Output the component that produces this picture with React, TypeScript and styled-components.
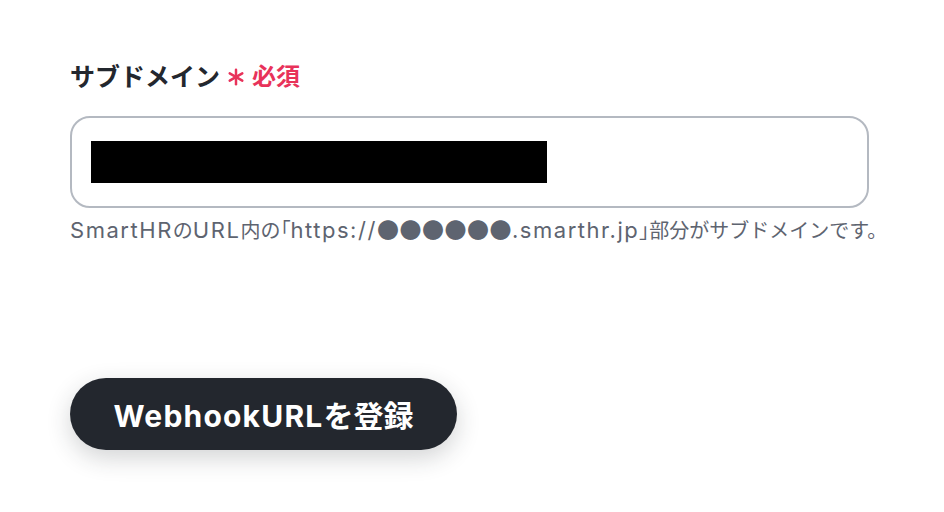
import React from "react"
import styled, { createGlobalStyle } from "styled-components"

const GlobalStyle = createGlobalStyle`
    html, body {
        margin: 0;
        padding: 0;
        background: #ffffff;
    }
    body {
        font-family: Inter, "Noto Sans CJK JP", sans-serif;
        color: #23272e;
    }
`

const Page = styled.div`
    width: 944px;
    height: 512px;
    box-sizing: border-box;
    padding: 59px 56px 0 70px;
    display: flex;
    flex-direction: column;
`

const Field = styled.div`
    display: flex;
    flex-direction: column;
`

const Label = styled.label`
    display: flex;
    align-items: center;
    gap: 7px;
    font-size: 25px;
    font-weight: 700;
    line-height: 36px;
    color: #23272e;
`

const Required = styled.span`
    display: flex;
    align-items: center;
    gap: 7px;
    color: #e8325a;
    font-size: 24px;
`

const Asterisk = styled.svg`
    width: 18px;
    height: 18px;
`

const InputBox = styled.div`
    margin-top: 21px;
    width: 799px;
    height: 92px;
    box-sizing: border-box;
    border: 2px solid #b4b9c1;
    border-radius: 20px;
    padding: 0 19px;
    display: flex;
    align-items: center;
`

const Redacted = styled.div`
    width: 456px;
    height: 42px;
    background: #000000;
`

const Help = styled.p`
    margin: 5px 0 0;
    font-size: 20px;
    line-height: 30px;
    color: #5e6470;
    white-space: nowrap;
`

const Latin = styled.span<{ $size: number; $track: number }>`
    font-size: ${p => p.$size}px;
    letter-spacing: ${p => p.$track}em;
`

const Bracket = styled.span`
    font-family: "Noto Sans CJK JP", sans-serif;
    font-feature-settings: "palt";
`

const Dots = styled.span`
    font-family: "Noto Sans CJK JP", sans-serif;
    font-size: 22px;
    letter-spacing: 0.5px;
`

const SubmitButton = styled.button`
    margin-top: 132px;
    align-self: flex-start;
    width: 387px;
    height: 72px;
    border: none;
    border-radius: 36px;
    background: #23272e;
    color: #ffffff;
    font-family: Inter, "Noto Sans CJK JP", sans-serif;
    font-size: 30px;
    font-weight: 700;
    cursor: pointer;
    box-shadow: 0 8px 24px rgba(35, 39, 46, 0.2);
`

export default function App() {
    return (
        <>
            <GlobalStyle />
            <Page>
                <Field>
                    <Label>
                        サブドメイン
                        <Required>
                            <Asterisk viewBox="0 0 16 16">
                                <g stroke="#e8325a" strokeWidth="2.2" strokeLinecap="round">
                                    <line x1="8" y1="1.5" x2="8" y2="14.5" />
                                    <line x1="2.4" y1="4.75" x2="13.6" y2="11.25" />
                                    <line x1="2.4" y1="11.25" x2="13.6" y2="4.75" />
                                </g>
                            </Asterisk>
                            必須
                        </Required>
                    </Label>
                    <InputBox>
                        <Redacted />
                    </InputBox>
                    <Help>
                        <Latin $size={22} $track={0.07}>SmartHR</Latin>の<Latin $size={22} $track={0.07}>URL</Latin>内の<Bracket>「</Bracket>
                        <Latin $size={22} $track={0.07}>https://</Latin><Dots>●●●●●●</Dots><Latin $size={22} $track={0.07}>.smarthr.jp</Latin>
                        <Bracket>」</Bracket>部分がサブドメインです。
                    </Help>
                </Field>
                <SubmitButton>
                    <Latin $size={30} $track={0.04}>WebhookURL</Latin>を登録
                </SubmitButton>
            </Page>
        </>
    )
}
